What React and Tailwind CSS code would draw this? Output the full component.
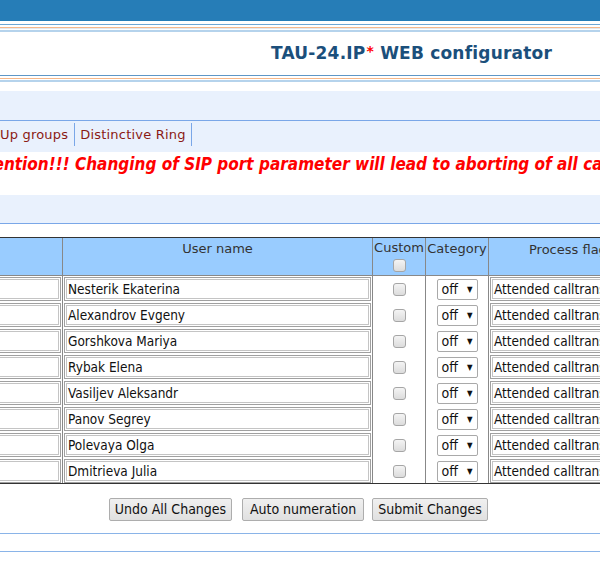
import React from "react";

const names = [
  "Nesterik Ekaterina",
  "Alexandrov Evgeny",
  "Gorshkova Mariya",
  "Rybak Elena",
  "Vasiljev Aleksandr",
  "Panov Segrey",
  "Polevaya Olga",
  "Dmitrieva Julia",
];

function Box({ className = "", children }) {
  return (
    <div className={"h-[24px] border border-[#a0a0a0] p-[1px] bg-white " + className}>
      <div className="h-full border border-[#c4c4c4] bg-white flex items-center px-[1px] overflow-hidden whitespace-nowrap text-[13.5px] text-[#111] font-['DejaVu_Sans_Condensed','DejaVu_Sans',sans-serif]">
        {children}
      </div>
    </div>
  );
}

function Check() {
  return (
    <div className="w-[13px] h-[13px] rounded-[3px] border border-[#a6a6a6] bg-gradient-to-b from-[#f4f4f4] to-[#dcdcdc]" />
  );
}

function Btn({ children, w }) {
  return (
    <div
      className={
        "h-[23px] border border-[#adadad] rounded-[2px] bg-gradient-to-b from-[#f0f0f0] to-[#e0e0e0] flex items-center justify-center text-[14px] text-[#111] font-['DejaVu_Sans_Condensed','DejaVu_Sans',sans-serif] " +
        w
      }
    >
      {children}
    </div>
  );
}

export default function App() {
  return (
    <div className="w-[600px] h-[562px] overflow-hidden bg-white font-['DejaVu_Sans',sans-serif]">
      {/* top bar */}
      <div className="h-[21px] bg-[#267db7]" />
      <div className="h-[3px]" />
      <div className="h-[1px] bg-[#6ea7d4]" />
      <div className="h-[2px]" />
      <div className="h-[1px] bg-[#f6b88a]" />
      <div className="h-[1px] bg-[#e3e9ef]" />
      <div className="h-[1px]" />
      <div className="h-[2px] bg-[#b5d3ec]" />
      {/* title */}
      <div className="h-[43px] flex items-center justify-end pr-[48px]">
        <span className="text-[17px] font-bold text-[#1b4f7b] tracking-[0.2px]">
          TAU-24.IP<sup className="text-[#ff0000] text-[14px] relative top-[-3px] ml-[1px]">*</sup> WEB configurator
        </span>
      </div>
      <div className="h-[1px] bg-[#5f97c6]" />
      <div className="h-[2px]" />
      <div className="h-[1px] bg-[#f6b88a]" />
      <div className="h-[1px]" />
      <div className="h-[2px] bg-[#b5d3ec]" />
      <div className="h-[9px]" />
      {/* panel 1 */}
      <div className="h-[29px] bg-[#e9f1fd]" />
      <div className="h-[1px] bg-[#7aa7e8]" />
      {/* tabs */}
      <div className="h-[31px] bg-[#e9f1fd] flex items-start pt-[2px] text-[13px] tracking-[0.2px] text-[#8b1a14]">
        <div className="h-[23px] flex items-center pl-[0px] pr-[6px] border-r border-[#7aa7e8]">
          Up groups
        </div>
        <div className="h-[23px] flex items-center px-[5px] border-r border-[#7aa7e8]">
          Distinctive Ring
        </div>
      </div>
      {/* warning */}
      <div className="h-[43px] overflow-hidden whitespace-nowrap">
        <div className="ml-[-32px] text-[17px] font-bold italic text-[#ff0000] font-['DejaVu_Sans_Condensed','DejaVu_Sans',sans-serif]">
          Attention!!! Changing of SIP port parameter will lead to aborting of all calls
        </div>
      </div>
      {/* panel 2 */}
      <div className="h-[28px] bg-[#e9f1fd]" />
      <div className="h-[1px] bg-[#7aa7e8]" />
      <div className="h-[13px]" />
      {/* table */}
      <div className="w-[820px] border-t border-b border-[#333]">
        <div className="flex h-[38px] bg-[#99ccff] border-b border-[#888] text-[13px] text-[#333]">
          <div className="w-[63px] border-r border-[#888]" />
          <div className="w-[310px] border-r border-[#888] text-center pt-[1px]">User name</div>
          <div className="w-[53px] border-r border-[#888] flex flex-col items-center">
            <span>Custom</span>
            <div className="mt-[1px]"><Check /></div>
          </div>
          <div className="w-[63px] border-r border-[#888] text-center pt-[1px]">Category</div>
          <div className="flex-1 pl-[40px] pt-[2px]">Process flags</div>
        </div>
        {names.map((n, i) => (
          <div key={n} className={"flex " + (i === 7 ? "h-[25px]" : "h-[26px]")}>
            <div className="w-[63px] border-r border-[#888] pt-[1px] pr-[1px]">
              <Box className="ml-[-4px]" />
            </div>
            <div className="w-[310px] border-r border-[#888] pt-[1px] pl-[1px] pr-[1px]">
              <Box>{n}</Box>
            </div>
            <div className="w-[53px] border-r border-[#888] flex justify-center pt-[7px]">
              <Check />
            </div>
            <div className="w-[63px] border-r border-[#888] flex justify-center pt-[3px]">
              <div className="w-[41px] h-[21px] border border-[#a9a9a9] rounded-[2px] bg-white flex items-center pl-[4px] text-[14px] text-[#111] font-['DejaVu_Sans_Condensed','DejaVu_Sans',sans-serif]">
                <span>off</span>
                <span className="ml-[9px] text-[8px]">▼</span>
              </div>
            </div>
            <div className="flex-1 pt-[1px] pl-[1px]">
              <Box className="w-[300px]">Attended calltransfer</Box>
            </div>
          </div>
        ))}
      </div>
      {/* buttons */}
      <div className="h-[14px]" />
      <div className="flex pl-[109px]">
        <Btn w="w-[123px]">Undo All Changes</Btn>
        <div className="w-[10px]" />
        <Btn w="w-[122px]">Auto numeration</Btn>
        <div className="w-[8px]" />
        <Btn w="w-[116px]">Submit Changes</Btn>
      </div>
      <div className="h-[12px]" />
      <div className="h-[1px] bg-[#8ab4e8]" />
      <div className="h-[17px]" />
      <div className="h-[1px] bg-[#8ab4e8]" />
    </div>
  );
}
